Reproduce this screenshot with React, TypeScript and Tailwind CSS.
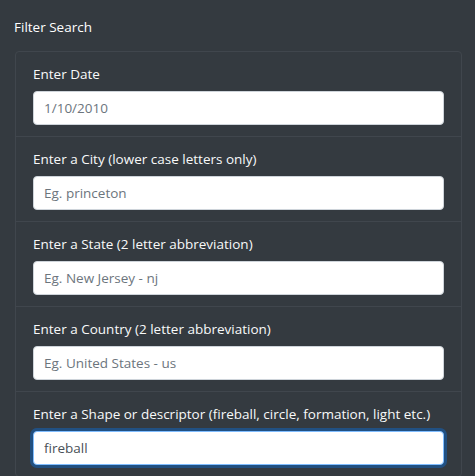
const fields = [
  { label: 'Enter Date', placeholder: '1/10/2010', value: '' },
  { label: 'Enter a City (lower case letters only)', placeholder: 'Eg. princeton', value: '' },
  { label: 'Enter a State (2 letter abbreviation)', placeholder: 'Eg. New Jersey - nj', value: '' },
  { label: 'Enter a Country (2 letter abbreviation)', placeholder: 'Eg. United States - us', value: '' },
  { label: 'Enter a Shape or descriptor (fireball, circle, formation, light etc.)', placeholder: '', value: 'fireball', focused: true },
]

export default function App() {
  return (
    <div className="min-h-[476px] bg-[#343a40] text-white font-['Open_Sans','Liberation_Sans',sans-serif] text-[13.5px]">
      <div className="pl-[14px] pr-[14px] pt-[16px]">
        <div className="h-[22px] leading-[22px] mb-[13px]">Filter Search</div>
        <ul className="ml-px border border-[#40464d] rounded-[4px] w-[447px]">
          {fields.map((f, i) => (
            <li
              key={i}
              className={`px-[17px] pt-[11px] pb-[11px] ${i > 0 ? 'border-t border-[#40464d]' : ''}`}
            >
              <label className="block h-[22px] leading-[22px] mb-[6px] text-[#f8f9fa]">{f.label}</label>
              <input
                type="text"
                defaultValue={f.value}
                placeholder={f.placeholder}
                className={
                  f.focused
                    ? 'block w-full h-[34px] px-[10px] rounded-[4px] bg-white border border-[#80bdff] text-[#495057] outline-none shadow-[0_0_0_3px_rgba(0,123,255,0.35)] placeholder:text-[#6c757d]'
                    : 'block w-full h-[34px] px-[10px] rounded-[4px] bg-white border border-[#ced4da] text-[#495057] outline-none placeholder:text-[#6c757d]'
                }
              />
            </li>
          ))}
        </ul>
      </div>
    </div>
  )
}
